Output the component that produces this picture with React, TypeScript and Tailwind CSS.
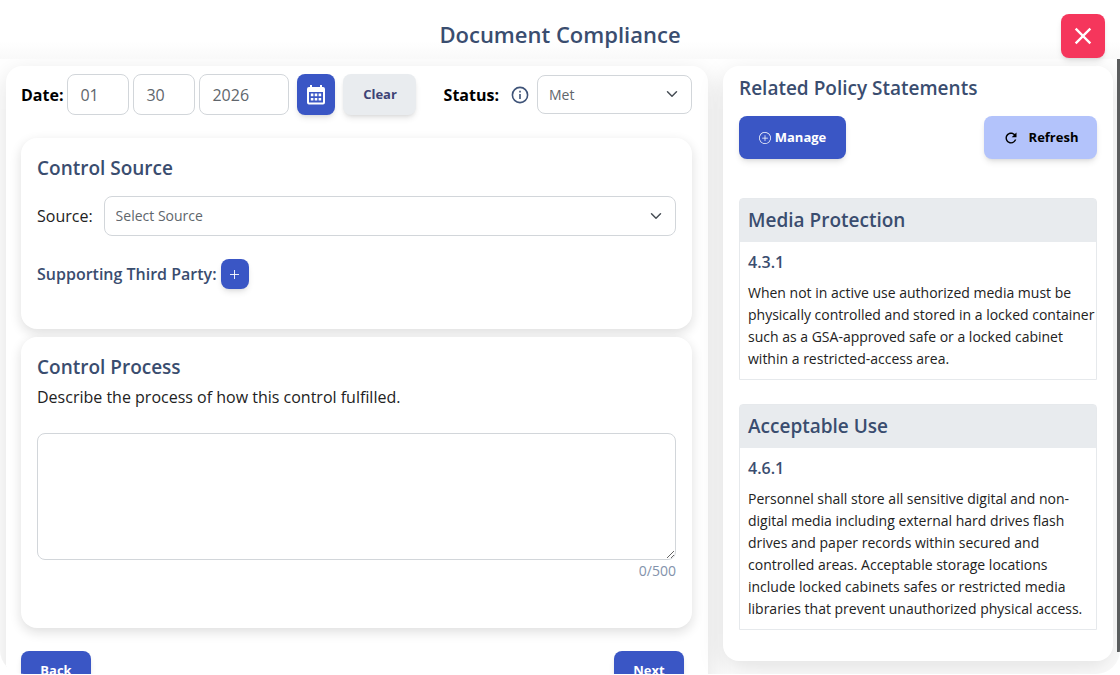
import { useState } from "react";
import { BsPlusCircle } from "react-icons/bs";
import { IoMdRefresh } from "react-icons/io";
import { MdClose } from "react-icons/md";

interface Policy {
  title: string;
  section: string;
  text: string;
}

const policies: Policy[] = [
  {
    title: "Media Protection",
    section: "4.3.1",
    text: "When not in active use authorized media must be physically controlled and stored in a locked container such as a GSA-approved safe or a locked cabinet within a restricted-access area.",
  },
  {
    title: "Acceptable Use",
    section: "4.6.1",
    text: "Personnel shall store all sensitive digital and non-digital media including external hard drives flash drives and paper records within secured and controlled areas. Acceptable storage locations include locked cabinets safes or restricted media libraries that prevent unauthorized physical access.",
  },
];

const MAX_LENGTH = 500;

const headingClass = "text-[19px] leading-7 font-semibold text-[#3a4d6f]";
const fieldClass =
  "rounded-lg border border-[#d2d6da] bg-white text-[#60666c] outline-none";
const primaryClass =
  "rounded-lg bg-[#3a56c5] text-[13px] font-bold text-white shadow-md cursor-pointer";

function Chevron({ className }: { className: string }) {
  return (
    <svg
      viewBox="0 0 16 16"
      className={className}
      fill="none"
      stroke="#495057"
      strokeWidth="2"
      strokeLinecap="round"
      strokeLinejoin="round"
      aria-hidden="true"
    >
      <path d="m2 5 6 6 6-6" />
    </svg>
  );
}

function CalendarIcon() {
  return (
    <svg viewBox="0 0 18 20" className="h-5 w-[18px]" fill="white" aria-hidden="true">
      <path
        fillRule="evenodd"
        d="M3 0h2v2h8V0h2v2h1a2 2 0 0 1 2 2v13.5a2 2 0 0 1-2 2H2a2 2 0 0 1-2-2V4a2 2 0 0 1 2-2h1V0ZM2 7v10.5h14V7H2Z"
      />
      <path d="M3.8 8.6h2.6v2.6H3.8zM7.7 8.6h2.6v2.6H7.7zM11.6 8.6h2.6v2.6h-2.6zM3.8 13h2.6v2.6H3.8zM7.7 13h2.6v2.6H7.7zM11.6 13h2.6v2.6h-2.6z" />
    </svg>
  );
}

function InfoIcon() {
  return (
    <svg
      viewBox="0 0 18 18"
      className="h-[18px] w-[18px]"
      fill="none"
      stroke="#3e5378"
      strokeWidth="1.6"
      aria-hidden="true"
    >
      <circle cx="9" cy="9" r="7.6" />
      <path d="M9 8v5M9 4.8v1.8" />
    </svg>
  );
}

function PolicyCard({ policy }: { policy: Policy }) {
  return (
    <article className="rounded-t-sm border border-[#e6e9ec]">
      <div className="bg-[#e8ebee] px-2 pt-[7px] pb-2">
        <h3 className={headingClass}>{policy.title}</h3>
      </div>
      <div className="pt-2 pb-[9px] pl-2">
        <h4 className="leading-6 font-semibold text-[#3a4d6f]">
          {policy.section}
        </h4>
        <p className="mt-2 text-sm leading-[22px] text-[#222]">{policy.text}</p>
      </div>
    </article>
  );
}

export default function App() {
  const [text, setText] = useState("");

  return (
    <div className="flex h-screen flex-col overflow-hidden bg-white pb-px font-['Open_Sans','Noto_Sans',sans-serif] text-black">
      <header className="relative flex h-[59px] shrink-0 items-center justify-center bg-gradient-to-b from-white from-70% to-[#f9f9f9] pt-3 pb-1">
        <h1 className="text-[22px] leading-8 font-semibold text-[#3a4d6f]">
          Document Compliance
        </h1>
        <button
          aria-label="Close"
          className="absolute top-[14px] right-[15px] flex h-11 w-11 cursor-pointer items-center justify-center rounded-lg bg-[#f5365c] text-white shadow-md"
        >
          <MdClose className="h-7 w-7" />
        </button>
      </header>

      <div className="flex min-h-0 flex-1 overflow-hidden rounded-b-3xl">
        <main className="flex min-w-0 flex-1 items-start gap-[15px] pt-[7px] pr-1 pl-[6px]">
          <div className="min-w-0 flex-1 rounded-2xl bg-white pt-2 pr-4 pb-8 pl-[15px] shadow-[0_8px_26px_rgba(20,20,20,0.13)]">
            <div className="flex items-center">
              <span className="font-bold">Date:</span>
              <input
                aria-label="Month"
                defaultValue="01"
                className={`${fieldClass} ml-1 h-[41px] w-[62px] px-3`}
              />
              <input
                aria-label="Day"
                defaultValue="30"
                className={`${fieldClass} ml-1 h-[41px] w-[62px] px-3`}
              />
              <input
                aria-label="Year"
                defaultValue="2026"
                className={`${fieldClass} ml-1 h-[41px] w-[90px] px-3`}
              />
              <button
                aria-label="Open calendar"
                className={`${primaryClass} ml-2 flex h-[41px] w-[38px] items-center justify-center`}
              >
                <CalendarIcon />
              </button>
              <button className="ml-2 h-[41px] w-[73px] cursor-pointer rounded-lg bg-[#e9ecef] text-[13px] font-bold text-[#3e4375] shadow-md">
                Clear
              </button>
              <div className="ml-auto flex items-center">
                <label htmlFor="status" className="font-bold">
                  Status:
                </label>
                <span className="mr-2 ml-3">
                  <InfoIcon />
                </span>
                <div className="relative">
                  <select
                    id="status"
                    className={`${fieldClass} h-[39px] w-[155px] appearance-none px-[11px] text-sm`}
                  >
                    <option>Met</option>
                    <option>Not Met</option>
                  </select>
                  <Chevron className="pointer-events-none absolute top-[13px] right-[14px] h-3 w-3" />
                </div>
              </div>
            </div>

            <section className="mt-[23px] rounded-2xl bg-white px-4 pt-4 pb-10 shadow-[0_4px_12px_rgba(20,20,20,0.14)]">
              <h2 className={headingClass}>Control Source</h2>
              <div className="mt-[14px] flex items-center gap-[11px]">
                <label htmlFor="source" className="text-[#222]">
                  Source:
                </label>
                <div className="relative flex-1">
                  <select
                    id="source"
                    className={`${fieldClass} h-10 w-full appearance-none px-[11px] text-sm`}
                  >
                    <option>Select Source</option>
                  </select>
                  <Chevron className="pointer-events-none absolute top-[14px] right-[14px] h-3 w-3" />
                </div>
              </div>
              <div className="mt-[23px] flex items-center gap-1">
                <h3 className="font-semibold text-[#3a4d6f]">
                  Supporting Third Party:
                </h3>
                <button
                  aria-label="Add third party"
                  className={`${primaryClass} flex h-[30px] w-7 items-center justify-center`}
                >
                  <svg viewBox="0 0 10 10" className="h-[9px] w-[9px]" stroke="white" aria-hidden="true">
                    <path d="M5 0v10M0 5h10" />
                  </svg>
                </button>
              </div>
            </section>

            <section className="mt-2 rounded-2xl bg-white px-4 pt-4 pb-[46px] shadow-[0_4px_12px_rgba(20,20,20,0.14)]">
              <h2 className={headingClass}>Control Process</h2>
              <label htmlFor="process" className="mt-1 block leading-6 text-[#222]">
                Describe the process of how this control fulfilled.
              </label>
              <textarea
                id="process"
                maxLength={MAX_LENGTH}
                value={text}
                onChange={(e) => setText(e.target.value)}
                className={`${fieldClass} mt-6 block h-[127px] w-full resize-y p-3 text-sm`}
              />
              <p className="text-right text-sm leading-[22px] text-[#8392ab]">
                {text.length}/{MAX_LENGTH}
              </p>
            </section>

            <div className="mt-[23px] flex justify-between pr-2">
              <button className={`${primaryClass} h-10 w-[70px]`}>Back</button>
              <button className={`${primaryClass} h-10 w-[70px]`}>Next</button>
            </div>
          </div>

          <aside className="w-[390px] shrink-0 rounded-2xl bg-white px-4 pt-2 pb-[31px] shadow-[0_8px_26px_rgba(20,20,20,0.13)]">
            <h2 className={headingClass}>Related Policy Statements</h2>
            <div className="mt-[14px] flex justify-between">
              <button
                className={`${primaryClass} flex h-[43px] w-[107px] items-center justify-center gap-1`}
              >
                <BsPlusCircle className="h-3 w-3" />
                Manage
              </button>
              <button className="flex h-[43px] w-[113px] cursor-pointer items-center justify-center gap-[10px] rounded-lg bg-[#b3c3fb] text-[13px] font-bold text-black shadow-md">
                <IoMdRefresh className="h-4 w-4" />
                Refresh
              </button>
            </div>
            <div className="mt-[39px] flex flex-col gap-6">
              {policies.map((policy) => (
                <PolicyCard key={policy.section} policy={policy} />
              ))}
            </div>
          </aside>
        </main>
        <div className="mb-[22px] w-[3px] shrink-0 bg-[#5b5d5e]" />
      </div>
    </div>
  );
}
